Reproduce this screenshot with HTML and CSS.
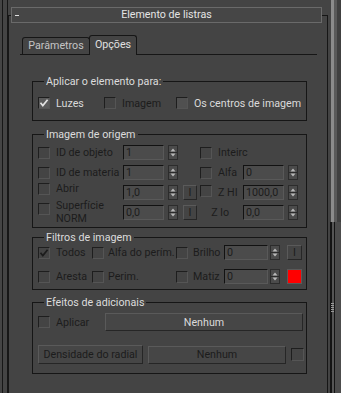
FILE: index.html
```html
<!DOCTYPE html>
<html>
<head>
<meta charset="utf-8">
<link rel="stylesheet" href="styles.css">
</head>
<body>
<div class="app">
  <div class="rail"></div>
  <fieldset class="rollout">
    <legend class="rollout-head"><div class="head-in"><span class="minus"></span><span class="head-title">Elemento de listras</span><span></span></div></legend>

    <div class="tabs">
      <div class="tab tab-params">Parâmetros</div>
      <div class="tab tab-active">Opções</div>
    </div>

    <fieldset class="group g1">
      <legend>Aplicar o elemento para:</legend>
      <div class="row1">
        <div class="opt w66"><span class="cb cb-on"><svg width="10" height="10" viewBox="0 0 10 10"><path d="M1.5 4.8 L3.8 7.6 L8.6 1.8" fill="none" stroke="#e2e2e2" stroke-width="1.7"/></svg></span><span>Luzes</span></div>
        <div class="opt w72 off"><span class="cb"></span><span>Imagem</span></div>
        <div class="opt"><span class="cb cb-en"></span><span>Os centros de imagem</span></div>
      </div>
    </fieldset>

    <fieldset class="group g2">
      <legend>Imagem de origem</legend>
      <div class="grid2 off">
        <span class="cb"></span><span class="lbl">ID de objeto</span>
        <span class="field">1</span>
        <svg class="spin" width="10" height="15" viewBox="0 0 10 15"><rect x="0.5" y="0.5" width="9" height="14" fill="#4b4b4b" stroke="#2c2c2c"/><path d="M2.5 6.5h5L5 3.5z" fill="#b8b8b8"/><path d="M1 7.5h8" stroke="#2a2a2a"/><path d="M2.5 8.5h5L5 11.5z" fill="#b8b8b8"/></svg>
        <span></span>
        <span class="cb"></span><span class="lbl span3">Inteirc</span>

        <span class="cb"></span><span class="lbl">ID de materia</span>
        <span class="field">1</span>
        <svg class="spin" width="10" height="15" viewBox="0 0 10 15"><rect x="0.5" y="0.5" width="9" height="14" fill="#4b4b4b" stroke="#2c2c2c"/><path d="M2.5 6.5h5L5 3.5z" fill="#b8b8b8"/><path d="M1 7.5h8" stroke="#2a2a2a"/><path d="M2.5 8.5h5L5 11.5z" fill="#b8b8b8"/></svg>
        <span></span>
        <span class="cb"></span><span class="lbl">Alfa</span>
        <span class="field">0</span>
        <svg class="spin" width="10" height="15" viewBox="0 0 10 15"><rect x="0.5" y="0.5" width="9" height="14" fill="#4b4b4b" stroke="#2c2c2c"/><path d="M2.5 6.5h5L5 3.5z" fill="#b8b8b8"/><path d="M1 7.5h8" stroke="#2a2a2a"/><path d="M2.5 8.5h5L5 11.5z" fill="#b8b8b8"/></svg>

        <span class="cb up2"></span><span class="lbl up3">Abrir</span>
        <span class="field">1,0</span>
        <svg class="spin" width="10" height="15" viewBox="0 0 10 15"><rect x="0.5" y="0.5" width="9" height="14" fill="#4b4b4b" stroke="#2c2c2c"/><path d="M2.5 6.5h5L5 3.5z" fill="#b8b8b8"/><path d="M1 7.5h8" stroke="#2a2a2a"/><path d="M2.5 8.5h5L5 11.5z" fill="#b8b8b8"/></svg>
        <span class="ibtn">I</span>
        <span class="cb top0"></span><span class="lbl">Z HI</span>
        <span class="field">1000,0</span>
        <svg class="spin" width="10" height="15" viewBox="0 0 10 15"><rect x="0.5" y="0.5" width="9" height="14" fill="#4b4b4b" stroke="#2c2c2c"/><path d="M2.5 6.5h5L5 3.5z" fill="#b8b8b8"/><path d="M1 7.5h8" stroke="#2a2a2a"/><path d="M2.5 8.5h5L5 11.5z" fill="#b8b8b8"/></svg>

        <span class="cb up2"></span><span class="lbl two">Superfície<br>NORM</span>
        <span class="field">0,0</span>
        <svg class="spin" width="10" height="15" viewBox="0 0 10 15"><rect x="0.5" y="0.5" width="9" height="14" fill="#4b4b4b" stroke="#2c2c2c"/><path d="M2.5 6.5h5L5 3.5z" fill="#b8b8b8"/><path d="M1 7.5h8" stroke="#2a2a2a"/><path d="M2.5 8.5h5L5 11.5z" fill="#b8b8b8"/></svg>
        <span class="ibtn">I</span>
        <span class="lbl zlo">Z lo</span>
        <span class="field">0,0</span>
        <svg class="spin" width="10" height="15" viewBox="0 0 10 15"><rect x="0.5" y="0.5" width="9" height="14" fill="#4b4b4b" stroke="#2c2c2c"/><path d="M2.5 6.5h5L5 3.5z" fill="#b8b8b8"/><path d="M1 7.5h8" stroke="#2a2a2a"/><path d="M2.5 8.5h5L5 11.5z" fill="#b8b8b8"/></svg>
      </div>
    </fieldset>

    <fieldset class="group g3">
      <legend>Filtros de imagem</legend>
      <div class="grid3 off">
        <span class="cb cb-dis-on"><svg width="10" height="10" viewBox="0 0 10 10"><path d="M1.5 4.8 L3.8 7.6 L8.6 1.8" fill="none" stroke="#1c1c1c" stroke-width="1.7"/></svg></span><span class="lbl">Todos</span>
        <span class="cb"></span><span class="lbl">Alfa do perím.</span>
        <span class="cb"></span><span class="lbl">Brilho</span>
        <span class="field wide">0</span>
        <svg class="spin" width="10" height="15" viewBox="0 0 10 15"><rect x="0.5" y="0.5" width="9" height="14" fill="#4b4b4b" stroke="#2c2c2c"/><path d="M2.5 6.5h5L5 3.5z" fill="#b8b8b8"/><path d="M1 7.5h8" stroke="#2a2a2a"/><path d="M2.5 8.5h5L5 11.5z" fill="#b8b8b8"/></svg>
        <span class="ibtn wide">I</span>

        <span class="cb"></span><span class="lbl">Aresta</span>
        <span class="cb"></span><span class="lbl">Perim.</span>
        <span class="cb"></span><span class="lbl">Matiz</span>
        <span class="field wide">0</span>
        <svg class="spin" width="10" height="15" viewBox="0 0 10 15"><rect x="0.5" y="0.5" width="9" height="14" fill="#4b4b4b" stroke="#2c2c2c"/><path d="M2.5 6.5h5L5 3.5z" fill="#b8b8b8"/><path d="M1 7.5h8" stroke="#2a2a2a"/><path d="M2.5 8.5h5L5 11.5z" fill="#b8b8b8"/></svg>
        <span class="swatch"></span>
      </div>
    </fieldset>

    <fieldset class="group g4">
      <legend>Efeitos de adicionais</legend>
      <div class="row4a">
        <span class="cb"></span><span class="lbl off">Aplicar</span>
        <span class="btn btn-wide">Nenhum</span>
      </div>
      <div class="row4b off">
        <span class="btn btn-dens">Densidade do radial</span>
        <span class="btn btn-mid">Nenhum</span>
        <span class="cb cb-big"></span>
      </div>
    </fieldset>
  </fieldset>
  <div class="scroll">
    <div class="track"></div>
    <div class="thumb"><span class="grip"></span></div>
  </div>
</div>
</body>
</html>
```

FILE: styles.css
```css
html, body {
  margin: 0;
  padding: 0;
  background: #444444;
}
body {
  font-family: Roboto, "Liberation Sans", sans-serif;
  font-size: 10.7px;
  color: #dadada;
  overflow: hidden;
}
.app {
  display: flex;
  height: 393px;
  overflow: hidden;
}
.rail {
  flex: none;
  margin-left: 2px;
  width: 6px;
  box-sizing: border-box;
  border-left: 1px solid #161616;
  border-right: 1px solid #161616;
}
.rollout {
  flex: none;
  box-sizing: border-box;
  width: 320px;
  height: 430px;
  margin: 7px 0 0 0;
  padding: 0;
  min-width: 0;
  border: 1px solid #161616;
  border-bottom: none;
}
.rollout-head {
  box-sizing: border-box;
  width: 311px;
  height: 16px;
  margin-left: 2px;
  padding: 0;
  border: 1px solid #6a6a6a;
  background: #464646;
}
.head-in {
  display: grid;
  grid-template-columns: 20px 1fr 20px;
  align-items: center;
  height: 14px;
  line-height: 14px;
  color: #e4e4e4;
}
.minus {
  width: 4px;
  height: 1px;
  margin-left: 3px;
  background: #e0e0e0;
}
.head-title {
  text-align: center;
}
.tabs {
  display: flex;
  align-items: flex-end;
  box-sizing: border-box;
  width: 297px;
  height: 20px;
  margin: 12px 0 0 11px;
  padding-left: 2px;
  border-bottom: 1px solid #161616;
}
.tab {
  box-sizing: border-box;
  border: 1px solid #161616;
  border-bottom: none;
  border-radius: 3px 3px 0 0;
  text-align: center;
  background: #444444;
}
.tab-params {
  width: 68px;
  height: 17px;
  line-height: 15px;
  color: #c4c4c4;
}
.tab-active {
  width: 48px;
  height: 20px;
  margin-left: -1px;
  margin-bottom: -1px;
  line-height: 18px;
  color: #e0e0e0;
}

.group {
  box-sizing: border-box;
  width: 275px;
  margin: 0 0 0 23px;
  padding: 0;
  min-width: 0;
  border: 1px solid #161616;
}
.group legend {
  margin-left: 6px;
  padding: 0 2px;
  height: 13px;
  line-height: 13px;
  color: #dcdcdc;
}
.g1 { margin-top: 20px; padding: 8px 0 10px 5px; }
.g2 { margin-top: 7px; padding: 4px 0 7px 5px; }
.g3 { margin-top: 3px; padding: 1px 0 5px 5px; }
.g4 { margin-top: 6px; padding: 4px 0 9px 5px; }

.off { color: #1c1c1c; }
.off .lbl { color: #1c1c1c; }

.row1 {
  display: flex;
}
.opt {
  display: flex;
  align-items: center;
  gap: 6px;
  height: 14px;
}
.w66 { width: 66px; }
.w72 { width: 72px; }

.cb {
  box-sizing: border-box;
  display: inline-flex;
  align-items: center;
  justify-content: center;
  width: 12px;
  height: 12px;
  border: 1px solid;
  border-color: #1e1e1e #555555 #555555 #1e1e1e;
  background: #444444;
}
.cb-en { background: #505050; }
.cb-on { background: #5a5a5a; }
.cb-dis-on { background: #444444; }
.cb-big { width: 13px; height: 13px; }

.lbl {
  white-space: nowrap;
  line-height: 13px;
}

.grid2 {
  display: grid;
  grid-template-columns: 18px 67px 45px 15px 17px 18px 25px 45px 10px;
  grid-template-rows: 15px 15px 15px 15px;
  row-gap: 5px;
  align-items: center;
}
.span3 { grid-column: span 3; }
.up2 { align-self: start; margin-top: -2px; }
.up3 { align-self: start; margin-top: -3px; }
.top0 { align-self: start; }
.two { align-self: start; margin-top: -6px; }
.zlo { grid-column: span 2; justify-self: end; margin-right: 14px; }

.field {
  box-sizing: border-box;
  width: 41px;
  height: 15px;
  padding-left: 2px;
  border: 1px solid;
  border-color: #121212 #595959 #595959 #121212;
  background: #4b4b4b;
  color: #1c1c1c;
  line-height: 13px;
  white-space: nowrap;
  overflow: hidden;
}
.field.wide { width: 44px; }
.spin { display: block; }

.ibtn {
  box-sizing: border-box;
  width: 14px;
  height: 15px;
  border: 1px solid;
  border-color: #5a5a5a #262626 #262626 #5a5a5a;
  text-align: center;
  line-height: 13px;
  color: #1c1c1c;
}
.ibtn.wide { width: 15px; }

.grid3 {
  display: grid;
  grid-template-columns: 18px 36px 16px 68px 17px 31px 46px 17px 15px;
  grid-template-rows: 15px 15px;
  row-gap: 9px;
  align-items: center;
}
.swatch {
  box-sizing: border-box;
  width: 15px;
  height: 15px;
  border: 1px solid #5a5a5a;
  background: #ff0000;
}

.row4a {
  display: grid;
  grid-template-columns: 18px 49px 198px;
  align-items: center;
  height: 18px;
}
.row4b {
  display: flex;
  align-items: center;
  margin-top: 14px;
  height: 19px;
}
.btn {
  box-sizing: border-box;
  display: flex;
  align-items: center;
  justify-content: center;
  border: 1px solid;
  border-color: #5a5a5a #262626 #262626 #5a5a5a;
  background: #464646;
  white-space: nowrap;
}
.btn-wide { height: 18px; color: #dadada; }
.btn-dens { width: 105px; height: 19px; }
.btn-mid { width: 138px; height: 18px; margin-left: 5px; }
.row4b .cb { margin-left: 5px; }

.scroll {
  flex: none;
  width: 13px;
  display: flex;
  flex-direction: column;
}
.track {
  height: 222px;
  background: linear-gradient(to right, #444444 0 3px, #8c8c8c 3px 6px, #5a5a5a 6px 9px, #404040 9px);
}
.thumb {
  flex: 1;
  display: flex;
  align-items: center;
  background: linear-gradient(to right, #444444 0 2px, #141414 2px 4px, #555555 4px 6px, #141414 6px 7px, #4c4c4c 7px);
}
.grip {
  display: block;
  width: 3px;
  height: 10px;
  margin-left: 3px;
  background: repeating-linear-gradient(to bottom, #9a9a9a 0 1px, transparent 1px 2px);
}
```
